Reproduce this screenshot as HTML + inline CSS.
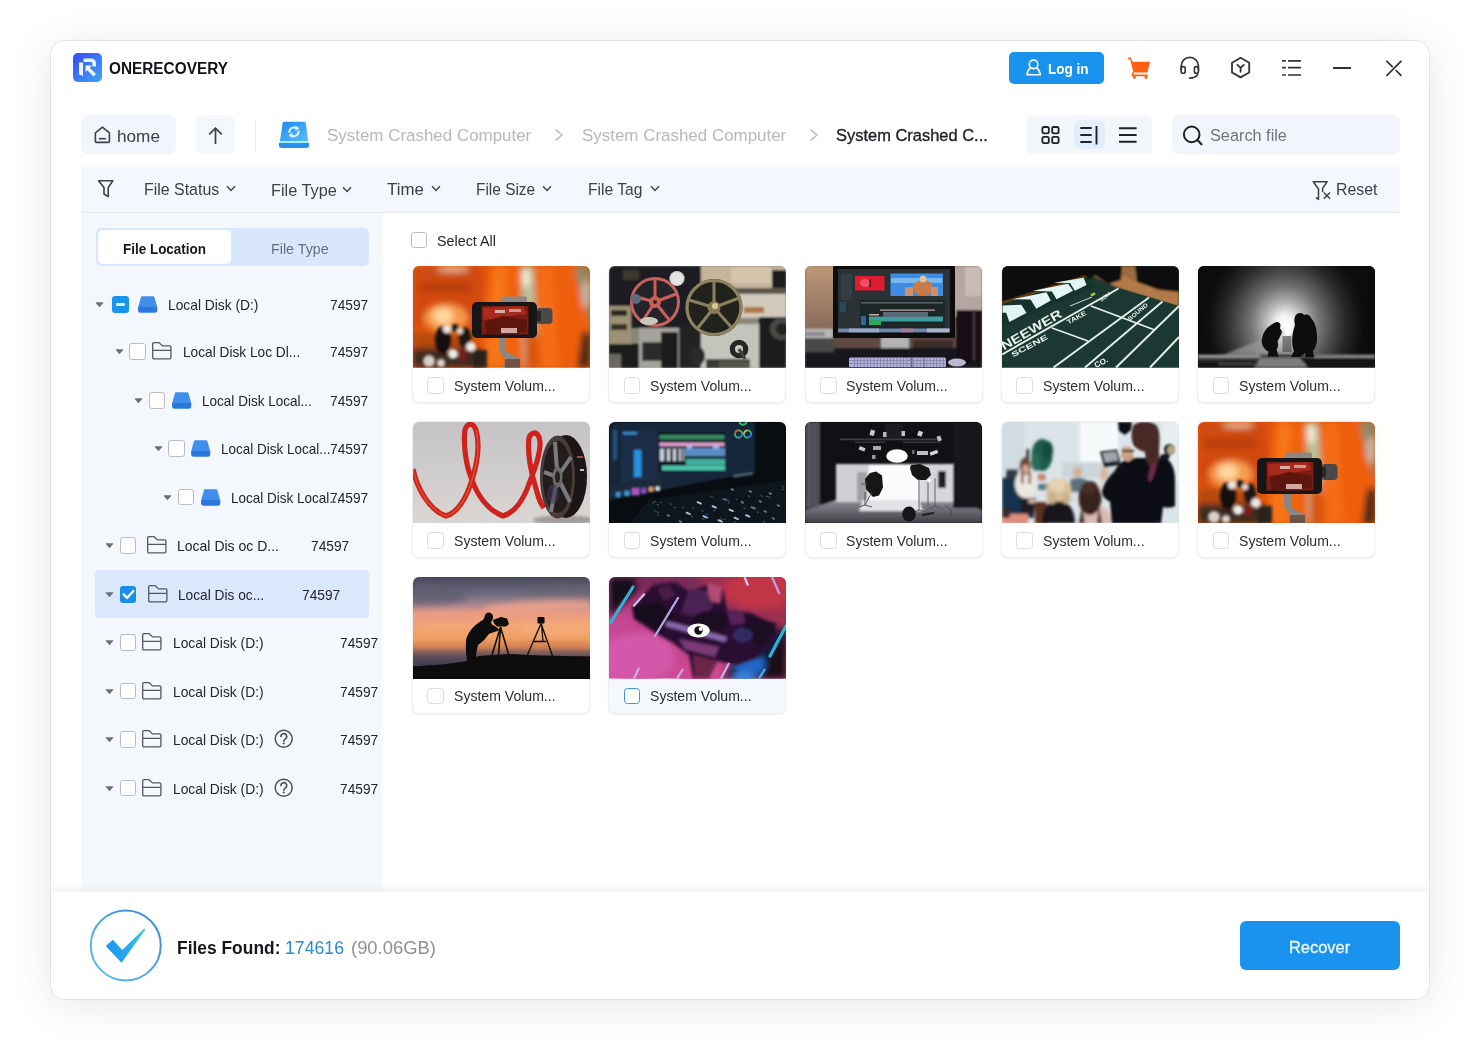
<!DOCTYPE html>
<html lang="en"><head><meta charset="utf-8"><title>OneRecovery</title>
<style>
html,body{margin:0;padding:0}
body{width:1480px;height:1040px;overflow:hidden;position:relative;background:#fff;font-family:"Liberation Sans",sans-serif}
.b{position:absolute;box-sizing:border-box;display:block}
.t{position:absolute;white-space:pre;transform-origin:0 0;font-family:"Liberation Sans",sans-serif}
</style></head><body>
<svg class="b" width="0" height="0" style="left:0;top:0"><defs><filter id="fa" filterUnits="userSpaceOnUse" x="-30" y="-30" width="240" height="170"><feGaussianBlur stdDeviation="0.5"/></filter><filter id="fb" filterUnits="userSpaceOnUse" x="-30" y="-30" width="240" height="170"><feGaussianBlur stdDeviation="1.0"/></filter><filter id="fc" filterUnits="userSpaceOnUse" x="-30" y="-30" width="240" height="170"><feGaussianBlur stdDeviation="1.8"/></filter><filter id="fd" filterUnits="userSpaceOnUse" x="-30" y="-30" width="240" height="170"><feGaussianBlur stdDeviation="3.2"/></filter><filter id="fe" filterUnits="userSpaceOnUse" x="-30" y="-30" width="240" height="170"><feGaussianBlur stdDeviation="6"/></filter><filter id="fg" filterUnits="userSpaceOnUse" x="-30" y="-30" width="240" height="170"><feGaussianBlur stdDeviation="10"/></filter></defs></svg>
<div class="b" style="left:51px;top:41px;width:1378px;height:958px;border-radius:14px;background:#fff;box-shadow:0 0 0 1px rgba(0,0,0,.07),0 6px 46px rgba(0,0,0,.10)"></div>
<svg class="b" style="left:72.9px;top:52.7px;" width="29" height="29" viewBox="0 0 29 29" fill="none"><defs><linearGradient id="lg" x1="0" y1="0" x2="1" y2="1"><stop offset="0" stop-color="#3a4af5"/><stop offset="1" stop-color="#3fa4f5"/></linearGradient></defs>
<rect width="29" height="29" rx="5" fill="url(#lg)"/>
<path d="M6 9.5h4v13.5l-4-1.5z" fill="#eaf6ff"/><path d="M10.5 5.5h8a4.5 4.5 0 0 1 4.5 4.5v3.5h-3.5v-3a1.5 1.5 0 0 0-1.5-1.5h-7.5z" fill="#eaf6ff"/><path d="M12.5 12.5h6.5l-2.2 2.2 6.2 6.2-2.5 2.5-6.2-6.2-1.8 1.8z" fill="#eaf6ff"/></svg>
<span class="t" style="left:109.3px;top:57.04px;font-size:17.2px;line-height:22px;color:#111318;font-weight:700;transform:scaleX(0.8936);">ONERECOVERY</span>
<div class="b" style="left:1009px;top:52px;width:94.5px;height:31.5px;border-radius:5px;background:#1a93ee"></div>
<svg class="b" style="left:1025px;top:58px;" width="17" height="19" viewBox="0 0 17 19" fill="none"><circle cx="8.600" cy="6.300" r="4.300" stroke="#fff" stroke-width="1.600"/><path d="M5.400 9.800C3.400 11.300 2.200 13.800 1.900 16.800h13.400c-.3-3-1.500-5.500-3.500-7" stroke="#fff" stroke-width="1.600" stroke-linejoin="round" stroke-linecap="round"/></svg>
<span class="t" style="left:1047.8px;top:60.01px;font-size:14.7px;line-height:19px;color:#fff;font-weight:700;transform:scaleX(0.9209);">Log in</span>
<svg class="b" style="left:1126px;top:55px;" width="26" height="26" viewBox="0 0 26 26" fill="none"><path d="M2.2 2.6h2.6l1.6 4.2H24l-2.6 10.6H7.4L4.2 4.4H2.2z" fill="#ff5f10"/><path d="M7.2 17.2 6.4 20.4h15.4" stroke="#ff5f10" stroke-width="1.6"/><circle cx="8.4" cy="22.2" r="1.5" fill="#ff5f10"/><circle cx="20" cy="22.2" r="1.5" fill="#ff5f10"/></svg>
<svg class="b" style="left:1178px;top:55px;" width="24" height="26" viewBox="0 0 24 26" fill="none"><path d="M3.2 15.4V11a8.6 8.6 0 0 1 17.2 0v4.4" stroke="#333" stroke-width="1.7"/><rect x="3.2" y="11.6" width="4" height="6.6" rx="1.8" stroke="#333" stroke-width="1.6"/><rect x="16.4" y="11.6" width="4" height="6.6" rx="1.8" stroke="#333" stroke-width="1.6"/><path d="M19.6 19.6c-1.4 2.4-4.2 3.4-8 3.6" stroke="#333" stroke-width="1.7" stroke-linecap="round"/></svg>
<svg class="b" style="left:1229px;top:55px;" width="24" height="26" viewBox="0 0 24 26" fill="none"><path d="M11.6 2.8 20.2 7.7v9.8l-8.6 4.9L3 17.5V7.7z" stroke="#333" stroke-width="1.8" stroke-linejoin="round"/><path d="M8.4 9.8l3.2 3 3.2-3M11.6 12.8v4" stroke="#333" stroke-width="1.8" stroke-linecap="round" stroke-linejoin="round"/></svg>
<svg class="b" style="left:1281px;top:58px;" width="22" height="20" viewBox="0 0 22 20" fill="none"><path d="M1 2.8h3.8M7 2.8h13M1 9.7h3.8M7 9.7h13M1 17h3.8M7 17h13" stroke="#333" stroke-width="1.7"/></svg>
<div class="b" style="left:1333px;top:66.5px;width:18.4px;height:2px;background:#333"></div>
<svg class="b" style="left:1384px;top:58px;" width="20" height="20" viewBox="0 0 20 20" fill="none"><path d="M17.4 2.8 2.4 17.8M2.4 2.8l6.4 6.4M11.6 12l5.8 5.8" stroke="#333" stroke-width="1.7" stroke-linecap="butt"/></svg>
<div class="b" style="left:81px;top:115px;width:94.5px;height:39px;border-radius:8px;background:#f1f5fc"></div>
<svg class="b" style="left:93px;top:125px;" width="19" height="19" viewBox="0 0 19 19" fill="none"><path d="M2.4 7.8 9.4 2.2l7 5.6v8.4a1.2 1.2 0 0 1-1.2 1.2H3.6a1.2 1.2 0 0 1-1.2-1.2z" stroke="#3b404a" stroke-width="1.6" stroke-linejoin="round"/><path d="M5.800 13.700h7" stroke="#3b404a" stroke-width="1.600"/></svg>
<span class="t" style="left:116.6px;top:124.77px;font-size:17.4px;line-height:23px;color:#3b404a;font-weight:400;transform:scaleX(0.9879);">home</span>
<div class="b" style="left:196px;top:115px;width:39px;height:39px;border-radius:8px;background:#f4f7fc"></div>
<svg class="b" style="left:205px;top:125px;" width="21" height="21" viewBox="0 0 21 21" fill="none"><path d="M10.5 19V3.2M4.2 9.4l6.3-6.3 6.3 6.3" stroke="#3b404a" stroke-width="1.7"/></svg>
<div class="b" style="left:254.8px;top:121px;width:1px;height:30px;background:#e6eaf1"></div>
<svg class="b" style="left:278px;top:121px;" width="32" height="28" viewBox="0 0 32 28" fill="none"><defs><linearGradient id="dg" x1="0" y1="0" x2="1" y2="1"><stop offset="0" stop-color="#1a8cf0"/><stop offset="1" stop-color="#5cbefa"/></linearGradient></defs>
<path d="M6.400.8h19.600a1.800 1.800 0 0 1 1.800 1.500L30.200 20.400H1.900L4.600 2.300A1.800 1.800 0 0 1 6.400.8z" fill="url(#dg)"/>
<rect x="1.700" y="20.200" width="28.700" height="2" fill="#a6f0ff"/>
<path d="M.9 22h30.200v2.600a2.400 2.400 0 0 1-2.400 2.400H3.300a2.400 2.400 0 0 1-2.400-2.400z" fill="#2392ec"/>
<path d="M11.400 11.200a4.700 4.700 0 0 1 7.500-3.800" stroke="#d8f8ff" stroke-width="2" fill="none" stroke-linecap="round"/><path d="M17.400 4.600l4 2.600-3.800 2.800z" fill="#d8f8ff"/>
<path d="M20.600 10.400a4.700 4.700 0 0 1-7.500 3.800" stroke="#d8f8ff" stroke-width="2" fill="none" stroke-linecap="round"/><path d="M14.600 17l-4-2.600 3.800-2.800z" fill="#d8f8ff"/></svg>
<span class="t" style="left:326.8px;top:124.68px;font-size:16.8px;line-height:22px;color:#b5b8bd;font-weight:400;transform:scaleX(1.0093);">System Crashed Computer</span>
<svg class="b" style="left:553px;top:127px;" width="12" height="16" viewBox="0 0 12 16" fill="none"><path d="M2.600 2.600l6.400 5.400-6.400 5.400" stroke="#b9bcc1" stroke-width="1.5"/></svg>
<span class="t" style="left:581.8px;top:124.68px;font-size:16.8px;line-height:22px;color:#b5b8bd;font-weight:400;transform:scaleX(1.0093);">System Crashed Computer</span>
<svg class="b" style="left:808px;top:127px;" width="12" height="16" viewBox="0 0 12 16" fill="none"><path d="M2.600 2.600l6.400 5.400-6.400 5.400" stroke="#b9bcc1" stroke-width="1.5"/></svg>
<span class="t" style="left:836.2px;top:124.68px;font-size:16.8px;line-height:22px;color:#1c1f26;font-weight:400;transform:scaleX(0.9807);-webkit-text-stroke:.35px #1c1f26;">System Crashed C...</span>
<div class="b" style="left:1026px;top:115px;width:126px;height:38.5px;border-radius:6px;background:#f3f7fc"></div>
<div class="b" style="left:1074px;top:120px;width:30.5px;height:29px;border-radius:6px;background:#e4edfa"></div>
<svg class="b" style="left:1040px;top:125px;" width="21" height="21" viewBox="0 0 21 21" fill="none"><rect x="2.4" y="2" width="6.4" height="6.400" rx="1.6" stroke="#1d212a" stroke-width="1.8"/><rect x="12.200" y="2" width="6.400" height="6.400" rx="1.600" stroke="#1d212a" stroke-width="1.800"/><rect x="2.400" y="11.800" width="6.400" height="6.400" rx="1.600" stroke="#1d212a" stroke-width="1.800"/><rect x="12.200" y="11.800" width="6.400" height="6.400" rx="1.600" stroke="#1d212a" stroke-width="1.800"/></svg>
<svg class="b" style="left:1079px;top:125px;" width="21" height="21" viewBox="0 0 21 21" fill="none"><path d="M1.300 3h11.400M1.300 10h11.400M1.300 17h11.400M17.500 1v18.400" stroke="#1d212a" stroke-width="1.900"/></svg>
<svg class="b" style="left:1118px;top:125px;" width="20" height="21" viewBox="0 0 20 21" fill="none"><path d="M1 3.200h17.600M1 10h17.600M1 16.800h17.600" stroke="#1d212a" stroke-width="1.900"/></svg>
<div class="b" style="left:1172px;top:115px;width:228px;height:38.5px;border-radius:6px;background:#f2f6fc"></div>
<svg class="b" style="left:1181px;top:124px;" width="23" height="23" viewBox="0 0 23 23" fill="none"><circle cx="10.700" cy="10.400" r="7.800" stroke="#1d212a" stroke-width="2"/><path d="M16.300 16l4.200 4.200" stroke="#1d212a" stroke-width="2.200" stroke-linecap="round"/></svg>
<span class="t" style="left:1209.8px;top:124.68px;font-size:16.8px;line-height:22px;color:#70747c;font-weight:400;transform:scaleX(0.9701);">Search file</span>
<div class="b" style="left:81px;top:164.5px;width:1319px;height:48px;background:linear-gradient(#fbfcfe 0,#f4f7fd 4px);border-bottom:1px solid #e6ebf3"></div>
<svg class="b" style="left:96px;top:178px;" width="20" height="22" viewBox="0 0 20 22" fill="none"><path d="M2.600 2.800h14.200l-4.600 6.800v9l-4.200-2.600V9.600z" stroke="#3b404a" stroke-width="1.600" stroke-linejoin="round"/></svg>
<span class="t" style="left:143.6px;top:178.78px;font-size:16.8px;line-height:22px;color:#3b404a;font-weight:400;transform:scaleX(0.9488);">File Status</span>
<svg class="b" style="left:226.2px;top:185.3px;" width="10" height="8" viewBox="0 0 10 8" fill="none"><path d="M1 1.300 5 5.400 9 1.300" stroke="#3b404a" stroke-width="1.400"/></svg>
<span class="t" style="left:270.7px;top:179.88px;font-size:16.8px;line-height:22px;color:#3b404a;font-weight:400;transform:scaleX(0.9697);">File Type</span>
<svg class="b" style="left:342.3px;top:185.85000000000002px;" width="10" height="8" viewBox="0 0 10 8" fill="none"><path d="M1 1.300 5 5.400 9 1.300" stroke="#3b404a" stroke-width="1.400"/></svg>
<span class="t" style="left:387px;top:178.78px;font-size:16.8px;line-height:22px;color:#3b404a;font-weight:400;transform:scaleX(1.0024);">Time</span>
<svg class="b" style="left:431px;top:185.3px;" width="10" height="8" viewBox="0 0 10 8" fill="none"><path d="M1 1.300 5 5.400 9 1.300" stroke="#3b404a" stroke-width="1.400"/></svg>
<span class="t" style="left:475.9px;top:178.78px;font-size:16.8px;line-height:22px;color:#3b404a;font-weight:400;transform:scaleX(0.9189);">File Size</span>
<svg class="b" style="left:542.3px;top:185.3px;" width="10" height="8" viewBox="0 0 10 8" fill="none"><path d="M1 1.300 5 5.400 9 1.300" stroke="#3b404a" stroke-width="1.400"/></svg>
<span class="t" style="left:587.9px;top:178.78px;font-size:16.8px;line-height:22px;color:#3b404a;font-weight:400;transform:scaleX(0.9313);">File Tag</span>
<svg class="b" style="left:650.1px;top:185.3px;" width="10" height="8" viewBox="0 0 10 8" fill="none"><path d="M1 1.300 5 5.400 9 1.300" stroke="#3b404a" stroke-width="1.400"/></svg>
<svg class="b" style="left:1311px;top:179px;" width="22" height="23" viewBox="0 0 22 23" fill="none"><path d="M7.500 20.400V10L2.300 2.700h13.900l-4.600 6.700v3.200M5.400 18.800l2.100 1.600" stroke="#3b404a" stroke-width="1.500" stroke-linejoin="round" stroke-linecap="round"/><path d="M12.800 13.500l6.300 6.200M19.100 13.500l-6.300 6.200" stroke="#3b404a" stroke-width="1.500"/></svg>
<span class="t" style="left:1335.7px;top:178.78px;font-size:16.8px;line-height:22px;color:#3b404a;font-weight:400;transform:scaleX(0.9456);">Reset</span>
<div class="b" style="left:81px;top:213px;width:304px;height:678px;background:linear-gradient(to right,#f4f8fd 299px,#fff 304px)"></div>
<div class="b" style="left:96px;top:228.3px;width:272.7px;height:37.9px;border-radius:5px;background:#d8e7fc"></div>
<div class="b" style="left:98.2px;top:230.2px;width:132.5px;height:33.9px;border-radius:5px;background:#fff"></div>
<span class="t" style="left:122.6px;top:239.97px;font-size:14.8px;line-height:19px;color:#15171c;font-weight:700;transform:scaleX(0.9094);">File Location</span>
<span class="t" style="left:271.2px;top:239.97px;font-size:14.8px;line-height:19px;color:#66707f;font-weight:400;transform:scaleX(0.9669);">File Type</span>
<div class="b" style="left:95.1px;top:570.1px;width:274.3px;height:47.6px;border-radius:4px;background:#dbe8fb"></div>
<svg class="b" style="left:95.4px;top:301.0px;" width="9" height="7" viewBox="0 0 9 7" fill="none"><path d="M1.2 1.300h6.600a.5.500 0 0 1 .4.800L4.900 5.700a.500.500 0 0 1-.8 0L.8 2.100a.500.500 0 0 1 .4-.8z" fill="#6c6f74"/></svg>
<div class="b" style="left:112.1px;top:295.90000000000003px;width:16.8px;height:16.8px;border-radius:3px;background:#1a93ee"></div>
<div class="b" style="left:115.69999999999999px;top:302.8px;width:9.600000000000001px;height:3.2px;border-radius:1px;background:#d9f0ff"></div>
<svg class="b" style="left:137.8px;top:295.90000000000003px;" width="20" height="18" viewBox="0 0 20 18" fill="none"><path d="M4.400.300h10.600a1.600 1.600 0 0 1 1.500 1.200L19.200 11H.2L2.900 1.500A1.600 1.600 0 0 1 4.400.3z" fill="#3f8eec"/><path d="M.1 10.900h19.200v3.600a2.300 2.300 0 0 1-2.300 2.300H2.400a2.300 2.300 0 0 1-2.300-2.300z" fill="#2b78dc"/></svg>
<span class="t" style="left:167.70000000000002px;top:295.97px;font-size:14.8px;line-height:19px;color:#23262d;font-weight:400;transform:scaleX(0.9316);">Local Disk (D:)</span>
<span class="t" style="left:330.4px;top:295.97px;font-size:14.8px;line-height:19px;color:#23262d;font-weight:400;transform:scaleX(0.9282);">74597</span>
<svg class="b" style="left:114.9px;top:348.4px;" width="9" height="7" viewBox="0 0 9 7" fill="none"><path d="M1.2 1.300h6.600a.5.500 0 0 1 .4.800L4.900 5.700a.500.500 0 0 1-.8 0L.8 2.100a.500.500 0 0 1 .4-.8z" fill="#6c6f74"/></svg>
<div class="b" style="left:129.1px;top:343.3px;width:16.8px;height:16.8px;border-radius:3px;background:#fff;border:1px solid #b9bdc3"></div>
<svg class="b" style="left:152.2px;top:342.3px;" width="20" height="18" viewBox="0 0 20 18" fill="none"><path d="M.7 15.600V1.900a1.200 1.200 0 0 1 1.200-1.200h5.200l3.400 3.200h7.200a1.200 1.200 0 0 1 1.200 1.200v10.500a1.200 1.200 0 0 1-1.200 1.200H1.900a1.200 1.200 0 0 1-1.200-1.200zM.7 8.400h18.200" stroke="#54575d" stroke-width="1.300" stroke-linejoin="round"/></svg>
<span class="t" style="left:182.5px;top:343.37px;font-size:14.8px;line-height:19px;color:#23262d;font-weight:400;transform:scaleX(0.9253);">Local Disk Loc Dl...</span>
<span class="t" style="left:330.4px;top:343.37px;font-size:14.8px;line-height:19px;color:#23262d;font-weight:400;transform:scaleX(0.9282);">74597</span>
<svg class="b" style="left:134.3px;top:396.9px;" width="9" height="7" viewBox="0 0 9 7" fill="none"><path d="M1.2 1.300h6.600a.5.500 0 0 1 .4.800L4.900 5.700a.500.500 0 0 1-.8 0L.8 2.100a.500.500 0 0 1 .4-.8z" fill="#6c6f74"/></svg>
<div class="b" style="left:148.6px;top:391.8px;width:16.8px;height:16.8px;border-radius:3px;background:#fff;border:1px solid #b9bdc3"></div>
<svg class="b" style="left:171.5px;top:391.8px;" width="20" height="18" viewBox="0 0 20 18" fill="none"><path d="M4.400.300h10.600a1.600 1.600 0 0 1 1.500 1.200L19.200 11H.2L2.900 1.500A1.600 1.600 0 0 1 4.400.3z" fill="#3f8eec"/><path d="M.1 10.900h19.200v3.600a2.300 2.300 0 0 1-2.300 2.300H2.400a2.300 2.300 0 0 1-2.300-2.300z" fill="#2b78dc"/></svg>
<span class="t" style="left:202.1px;top:391.87px;font-size:14.8px;line-height:19px;color:#23262d;font-weight:400;transform:scaleX(0.9151);">Local Disk Local...</span>
<span class="t" style="left:330.4px;top:391.87px;font-size:14.8px;line-height:19px;color:#23262d;font-weight:400;transform:scaleX(0.9282);">74597</span>
<svg class="b" style="left:153.7px;top:445.3px;" width="9" height="7" viewBox="0 0 9 7" fill="none"><path d="M1.2 1.300h6.600a.5.500 0 0 1 .4.800L4.900 5.700a.500.500 0 0 1-.8 0L.8 2.100a.500.500 0 0 1 .4-.8z" fill="#6c6f74"/></svg>
<div class="b" style="left:168.1px;top:440.20000000000005px;width:16.8px;height:16.8px;border-radius:3px;background:#fff;border:1px solid #b9bdc3"></div>
<svg class="b" style="left:190.8px;top:440.20000000000005px;" width="20" height="18" viewBox="0 0 20 18" fill="none"><path d="M4.400.300h10.600a1.600 1.600 0 0 1 1.500 1.200L19.200 11H.2L2.900 1.500A1.600 1.600 0 0 1 4.400.3z" fill="#3f8eec"/><path d="M.1 10.900h19.200v3.600a2.300 2.300 0 0 1-2.300 2.300H2.400a2.300 2.300 0 0 1-2.300-2.300z" fill="#2b78dc"/></svg>
<span class="t" style="left:221.4px;top:440.27px;font-size:14.8px;line-height:19px;color:#23262d;font-weight:400;transform:scaleX(0.9109);">Local Disk Local...</span>
<span class="t" style="left:330.4px;top:440.27px;font-size:14.8px;line-height:19px;color:#23262d;font-weight:400;transform:scaleX(0.9282);">74597</span>
<svg class="b" style="left:163.3px;top:493.7px;" width="9" height="7" viewBox="0 0 9 7" fill="none"><path d="M1.2 1.300h6.600a.5.500 0 0 1 .4.800L4.900 5.700a.500.500 0 0 1-.8 0L.8 2.100a.500.500 0 0 1 .4-.8z" fill="#6c6f74"/></svg>
<div class="b" style="left:177.7px;top:488.6px;width:16.8px;height:16.8px;border-radius:3px;background:#fff;border:1px solid #b9bdc3"></div>
<svg class="b" style="left:200.5px;top:488.6px;" width="20" height="18" viewBox="0 0 20 18" fill="none"><path d="M4.400.300h10.600a1.600 1.600 0 0 1 1.500 1.200L19.200 11H.2L2.900 1.500A1.600 1.600 0 0 1 4.400.3z" fill="#3f8eec"/><path d="M.1 10.900h19.200v3.600a2.300 2.300 0 0 1-2.300 2.300H2.400a2.300 2.300 0 0 1-2.300-2.300z" fill="#2b78dc"/></svg>
<span class="t" style="left:231.1px;top:488.67px;font-size:14.8px;line-height:19px;color:#23262d;font-weight:400;transform:scaleX(0.9109);">Local Disk Local...</span>
<span class="t" style="left:330.4px;top:488.67px;font-size:14.8px;line-height:19px;color:#23262d;font-weight:400;transform:scaleX(0.9282);">74597</span>
<svg class="b" style="left:105.4px;top:542.1px;" width="9" height="7" viewBox="0 0 9 7" fill="none"><path d="M1.2 1.300h6.600a.5.500 0 0 1 .4.800L4.900 5.700a.500.500 0 0 1-.8 0L.8 2.100a.500.500 0 0 1 .4-.8z" fill="#6c6f74"/></svg>
<div class="b" style="left:119.5px;top:537.0px;width:16.8px;height:16.8px;border-radius:3px;background:#fff;border:1px solid #b9bdc3"></div>
<svg class="b" style="left:147.1px;top:536.0px;" width="20" height="18" viewBox="0 0 20 18" fill="none"><path d="M.7 15.600V1.900a1.200 1.200 0 0 1 1.200-1.200h5.200l3.400 3.200h7.200a1.200 1.200 0 0 1 1.200 1.200v10.500a1.200 1.200 0 0 1-1.200 1.200H1.900a1.200 1.200 0 0 1-1.200-1.200zM.7 8.400h18.200" stroke="#54575d" stroke-width="1.300" stroke-linejoin="round"/></svg>
<span class="t" style="left:177.4px;top:537.07px;font-size:14.8px;line-height:19px;color:#23262d;font-weight:400;transform:scaleX(0.9466);">Local Dis oc D...</span>
<span class="t" style="left:311.0px;top:537.07px;font-size:14.8px;line-height:19px;color:#23262d;font-weight:400;transform:scaleX(0.9282);">74597</span>
<svg class="b" style="left:105.4px;top:590.9000000000001px;" width="9" height="7" viewBox="0 0 9 7" fill="none"><path d="M1.2 1.300h6.600a.5.500 0 0 1 .4.800L4.900 5.700a.500.500 0 0 1-.8 0L.8 2.100a.500.500 0 0 1 .4-.8z" fill="#6c6f74"/></svg>
<div class="b" style="left:119.5px;top:585.8000000000001px;width:16.8px;height:16.8px;border-radius:3px;background:#1a8ee8"></div>
<svg class="b" style="left:119.5px;top:585.8000000000001px;" width="17" height="17" viewBox="0 0 17 17" fill="none"><path d="M3.700 8.400l3.400 3.600 6.200-7" stroke="#fff" stroke-width="2.300" stroke-linecap="round" stroke-linejoin="round"/></svg>
<svg class="b" style="left:147.5px;top:584.8000000000001px;" width="20" height="18" viewBox="0 0 20 18" fill="none"><path d="M.7 15.600V1.900a1.200 1.200 0 0 1 1.200-1.200h5.200l3.400 3.200h7.200a1.200 1.200 0 0 1 1.200 1.200v10.500a1.200 1.200 0 0 1-1.200 1.200H1.900a1.200 1.200 0 0 1-1.200-1.200zM.7 8.400h18.200" stroke="#54575d" stroke-width="1.300" stroke-linejoin="round"/></svg>
<span class="t" style="left:177.6px;top:585.87px;font-size:14.8px;line-height:19px;color:#23262d;font-weight:400;transform:scaleX(0.9263);">Local Dis oc...</span>
<span class="t" style="left:302.0px;top:585.87px;font-size:14.8px;line-height:19px;color:#23262d;font-weight:400;transform:scaleX(0.9282);">74597</span>
<svg class="b" style="left:105.4px;top:639.2px;" width="9" height="7" viewBox="0 0 9 7" fill="none"><path d="M1.2 1.300h6.600a.5.500 0 0 1 .4.800L4.900 5.700a.500.500 0 0 1-.8 0L.8 2.100a.500.500 0 0 1 .4-.8z" fill="#6c6f74"/></svg>
<div class="b" style="left:119.5px;top:634.1px;width:16.8px;height:16.8px;border-radius:3px;background:#fff;border:1px solid #b9bdc3"></div>
<svg class="b" style="left:142.39999999999998px;top:633.1px;" width="20" height="18" viewBox="0 0 20 18" fill="none"><path d="M.7 15.600V1.900a1.200 1.200 0 0 1 1.200-1.200h5.200l3.400 3.200h7.200a1.200 1.200 0 0 1 1.200 1.200v10.500a1.200 1.200 0 0 1-1.200 1.200H1.900a1.200 1.200 0 0 1-1.200-1.200zM.7 8.400h18.200" stroke="#54575d" stroke-width="1.300" stroke-linejoin="round"/></svg>
<span class="t" style="left:172.5px;top:634.17px;font-size:14.8px;line-height:19px;color:#23262d;font-weight:400;transform:scaleX(0.9336);">Local Disk (D:)</span>
<span class="t" style="left:339.9px;top:634.17px;font-size:14.8px;line-height:19px;color:#23262d;font-weight:400;transform:scaleX(0.9282);">74597</span>
<svg class="b" style="left:105.4px;top:687.8000000000001px;" width="9" height="7" viewBox="0 0 9 7" fill="none"><path d="M1.2 1.300h6.600a.5.500 0 0 1 .4.800L4.900 5.700a.500.500 0 0 1-.8 0L.8 2.100a.500.500 0 0 1 .4-.8z" fill="#6c6f74"/></svg>
<div class="b" style="left:119.5px;top:682.7px;width:16.8px;height:16.8px;border-radius:3px;background:#fff;border:1px solid #b9bdc3"></div>
<svg class="b" style="left:142.39999999999998px;top:681.7px;" width="20" height="18" viewBox="0 0 20 18" fill="none"><path d="M.7 15.600V1.900a1.200 1.200 0 0 1 1.200-1.200h5.200l3.400 3.200h7.200a1.200 1.200 0 0 1 1.200 1.200v10.500a1.200 1.200 0 0 1-1.200 1.200H1.900a1.200 1.200 0 0 1-1.200-1.200zM.7 8.400h18.200" stroke="#54575d" stroke-width="1.300" stroke-linejoin="round"/></svg>
<span class="t" style="left:172.5px;top:682.77px;font-size:14.8px;line-height:19px;color:#23262d;font-weight:400;transform:scaleX(0.9336);">Local Disk (D:)</span>
<span class="t" style="left:339.9px;top:682.77px;font-size:14.8px;line-height:19px;color:#23262d;font-weight:400;transform:scaleX(0.9282);">74597</span>
<svg class="b" style="left:105.4px;top:736.1px;" width="9" height="7" viewBox="0 0 9 7" fill="none"><path d="M1.2 1.300h6.600a.5.500 0 0 1 .4.800L4.900 5.700a.500.500 0 0 1-.8 0L.8 2.100a.500.500 0 0 1 .4-.8z" fill="#6c6f74"/></svg>
<div class="b" style="left:119.5px;top:731.0px;width:16.8px;height:16.8px;border-radius:3px;background:#fff;border:1px solid #b9bdc3"></div>
<svg class="b" style="left:142.39999999999998px;top:730.0px;" width="20" height="18" viewBox="0 0 20 18" fill="none"><path d="M.7 15.600V1.900a1.200 1.200 0 0 1 1.200-1.200h5.200l3.400 3.200h7.200a1.200 1.200 0 0 1 1.200 1.200v10.500a1.200 1.200 0 0 1-1.200 1.200H1.900a1.200 1.200 0 0 1-1.200-1.200zM.7 8.400h18.200" stroke="#54575d" stroke-width="1.300" stroke-linejoin="round"/></svg>
<span class="t" style="left:172.5px;top:731.07px;font-size:14.8px;line-height:19px;color:#23262d;font-weight:400;transform:scaleX(0.9336);">Local Disk (D:)</span>
<span class="t" style="left:339.9px;top:731.07px;font-size:14.8px;line-height:19px;color:#23262d;font-weight:400;transform:scaleX(0.9282);">74597</span>
<svg class="b" style="left:273.5px;top:729.1999999999999px;" width="20" height="20" viewBox="0 0 20 20" fill="none"><circle cx="9.700" cy="9.700" r="8.500" stroke="#4a4d53" stroke-width="1.500"/><path d="M6.900 7.600a2.900 2.900 0 1 1 4.300 2.500c-.9.500-1.400 1-1.400 2.100" stroke="#4a4d53" stroke-width="1.600" stroke-linecap="round"/><circle cx="9.700" cy="14.600" r="1" fill="#4a4d53"/></svg>
<svg class="b" style="left:105.4px;top:784.7px;" width="9" height="7" viewBox="0 0 9 7" fill="none"><path d="M1.2 1.300h6.600a.5.500 0 0 1 .4.800L4.900 5.700a.500.500 0 0 1-.8 0L.8 2.100a.500.500 0 0 1 .4-.8z" fill="#6c6f74"/></svg>
<div class="b" style="left:119.5px;top:779.6px;width:16.8px;height:16.8px;border-radius:3px;background:#fff;border:1px solid #b9bdc3"></div>
<svg class="b" style="left:142.39999999999998px;top:778.6px;" width="20" height="18" viewBox="0 0 20 18" fill="none"><path d="M.7 15.600V1.900a1.200 1.200 0 0 1 1.200-1.200h5.200l3.400 3.200h7.200a1.200 1.200 0 0 1 1.200 1.200v10.500a1.200 1.200 0 0 1-1.200 1.200H1.900a1.200 1.200 0 0 1-1.200-1.200zM.7 8.400h18.200" stroke="#54575d" stroke-width="1.300" stroke-linejoin="round"/></svg>
<span class="t" style="left:172.5px;top:779.67px;font-size:14.8px;line-height:19px;color:#23262d;font-weight:400;transform:scaleX(0.9336);">Local Disk (D:)</span>
<span class="t" style="left:339.9px;top:779.67px;font-size:14.8px;line-height:19px;color:#23262d;font-weight:400;transform:scaleX(0.9282);">74597</span>
<svg class="b" style="left:273.5px;top:777.8px;" width="20" height="20" viewBox="0 0 20 20" fill="none"><circle cx="9.700" cy="9.700" r="8.500" stroke="#4a4d53" stroke-width="1.500"/><path d="M6.900 7.600a2.900 2.900 0 1 1 4.300 2.500c-.9.500-1.400 1-1.400 2.100" stroke="#4a4d53" stroke-width="1.600" stroke-linecap="round"/><circle cx="9.700" cy="14.600" r="1" fill="#4a4d53"/></svg>
<div class="b" style="left:410.5px;top:231.5px;width:16.6px;height:16.6px;border-radius:3px;background:#fff;border:1px solid #b9bdc3"></div>
<span class="t" style="left:436.7px;top:231.67px;font-size:14.8px;line-height:19px;color:#23262d;font-weight:400;transform:scaleX(0.9691);">Select All</span>
<div class="b" style="left:412.1px;top:265.9px;width:178px;height:137px;border-radius:7px;background:#fff;border:1px solid #eeeff1;box-shadow:0 1px 2px rgba(0,0,0,.07)"></div>
<svg class="b" style="left:412.6px;top:266.4px;border-radius:6px 6px 0 0" width="177" height="101.500" viewBox="0 0 177 101.500" preserveAspectRatio="none"><rect x="0" y="0" width="177" height="101.5" fill="#e4560c" /><g filter="url(#fd)" ><rect x="0" y="0" width="70" height="60" fill="#d24a0a" /><ellipse cx="33" cy="52" rx="22" ry="14" fill="#f89a4c" /><ellipse cx="30" cy="50" rx="10" ry="8" fill="#ffd9a0" /><rect x="6" y="17" width="52" height="9" fill="#b83c08" /><rect x="8" y="4" width="50" height="6" fill="#c8501a" /><ellipse cx="40" cy="3" rx="16" ry="3" fill="#e8b890" /><rect x="0" y="82" width="74" height="20" fill="#3a2a22" /><rect x="0" y="66" width="60" height="16" fill="#b8480e" /><path d="M77 0h36l7 101.5H67z" fill="#f0620c" /><path d="M80 0h14l-4 101.5H72z" fill="#f67416" /><path d="M108 0h12l6 60-8 41h-8z" fill="#b8c098" /><ellipse cx="113" cy="12" rx="4" ry="10" fill="#f4f0d8" /><path d="M120 0h41l16 60v41.5h-50z" fill="#ee5e0a" /><path d="M124 0h16l6 101.5h-18z" fill="#f46c12" /><path d="M161 0h16v60z" fill="#8c8a68" /><ellipse cx="173" cy="28" rx="5" ry="14" fill="#c0b8a8" /><path d="M112 60l10 0 4 41.5h-14z" fill="#d8560e" /><path d="M169 66h8v35.500h-13z" fill="#4a2a18" /></g><g filter="url(#fc)" ><ellipse cx="30" cy="74" rx="8" ry="14" fill="#15110f" /><ellipse cx="52" cy="72" rx="6" ry="11" fill="#1c1512" /><ellipse cx="42" cy="62" rx="4" ry="4" fill="#1a1210" /><circle cx="34" cy="63" r="4" fill="#ece6e2" /><circle cx="47" cy="65" r="3" fill="#e6dcd6" /><circle cx="58" cy="81" r="5" fill="#eee8e4" /><circle cx="40" cy="88" r="5" fill="#f0eae6" /><circle cx="16" cy="95" r="6" fill="#d8d0ca" /><circle cx="28" cy="97" r="4" fill="#e0d8d2" /><ellipse cx="50" cy="90" rx="4" ry="6" fill="#7a1c18" /><rect x="60" y="84" width="14" height="17.5" fill="#2a211d" /></g><g filter="url(#fa)" ><path d="M86 71h7v14l14 8v8.5H91l1-9-6-8z" fill="#8c8682" /><rect x="92" y="93" width="15" height="8.5" fill="#6e5248" /><rect x="88" y="30.5" width="26" height="7" fill="#8e8884" rx="1.5"/><rect x="123" y="42" width="16.5" height="16" fill="#4c4649" rx="4"/><rect x="124" y="45" width="4" height="10" fill="#2a2628" /><rect x="59" y="36" width="65" height="36" fill="#181213" rx="5"/><rect x="68.5" y="40" width="47" height="28.5" fill="#7c1a12" /><path d="M70 42l40-2 4 8-44 6z" fill="#a82a1c" /><path d="M72 56l18-6 24 4v12l-40 2z" fill="#5c120e" /><rect x="88" y="62" width="16" height="5" fill="#d0a8a0" /><rect x="82" y="44" width="10" height="3" fill="#d8b0a8" /><rect x="96" y="43" width="12" height="3" fill="#c89890" /></g></svg>
<div class="b" style="left:427.40000000000003px;top:376.9px;width:16.7px;height:16.7px;border-radius:3.500px;background:#fff;border:1.200px solid #dcdcde"></div>
<span class="t" style="left:453.8px;top:376.87px;font-size:14.8px;line-height:19px;color:#2a2d33;font-weight:400;transform:scaleX(0.9502);">System Volum...</span>
<div class="b" style="left:608.4px;top:265.9px;width:178px;height:137px;border-radius:7px;background:#fff;border:1px solid #eeeff1;box-shadow:0 1px 2px rgba(0,0,0,.07)"></div>
<svg class="b" style="left:608.9px;top:266.4px;border-radius:6px 6px 0 0" width="177" height="101.500" viewBox="0 0 177 101.500" preserveAspectRatio="none"><rect x="0" y="0" width="177" height="101.5" fill="#8c8678" /><g filter="url(#fb)" ><rect x="0" y="0" width="92" height="62" fill="#1d1c22" /><rect x="0" y="40" width="22" height="38" fill="#9c9074" /><rect x="2" y="44" width="16" height="6" fill="#2a2824" /><rect x="2" y="58" width="16" height="6" fill="#35322c" /><rect x="92" y="0" width="85" height="22" fill="#c4b49c" /><rect x="122" y="1" width="40" height="16" fill="#d4c4ac" /><rect x="163" y="4" width="14" height="28" fill="#1a1a1e" /><rect x="95" y="22" width="82" height="8" fill="#5c5448" /><rect x="128" y="28" width="49" height="24" fill="#d2cabc" /><rect x="135" y="41" width="20" height="6" fill="#b07848" /><rect x="112" y="30" width="18" height="20" fill="#403c38" /><rect x="86" y="58" width="66" height="44" fill="#c4c4bc" /><rect x="150" y="51" width="27" height="51" fill="#1b1b1c" /><circle cx="172" cy="63" r="11" fill="#4a4a46" /><circle cx="173" cy="63" r="6" fill="#20201f" /><rect x="0" y="78" width="32" height="24" fill="#1c1b1c" /><rect x="0" y="88" width="12" height="14" fill="#6a6860" /><rect x="30" y="62" width="60" height="40" fill="#a4a49c" /><rect x="33" y="76" width="20" height="19" fill="#3c3c3a" /><rect x="34.5" y="77.5" width="17" height="16" fill="#2a2a29" /><rect x="52" y="66" width="17" height="36" fill="#1e1e1f" /><rect x="70" y="58" width="22" height="44" fill="#232322" /><ellipse cx="88" cy="90" rx="8" ry="10" fill="#2c2c2b" /><rect x="14" y="4" width="16" height="10" fill="#3a382e" /><rect x="97" y="93" width="44" height="9" fill="#3a3a36" /><rect x="110" y="95" width="30" height="7" fill="#55554e" /></g><g filter="url(#fa)" ><circle cx="46" cy="36" r="24.5" fill="#26222a" /><circle cx="46" cy="36" r="23.500" fill="none" stroke="#c4645e" stroke-width="3"/><path d="M46 36L46 13M46 36L67 28M46 36L61 55M46 36L33 56M46 36L24 30" stroke="#c8605c" stroke-width="3" fill="none" /><circle cx="46" cy="36" r="6" fill="#c86058" /><circle cx="46" cy="36" r="2" fill="#40201c" /><ellipse cx="40" cy="55" rx="9" ry="4" fill="#c8c8c0" /><circle cx="27" cy="33" r="5" fill="#5a6a7a" /><circle cx="105" cy="41.5" r="28.5" fill="#24221f" /><circle cx="105" cy="41.500" r="27" fill="none" stroke="#8e8464" stroke-width="3.200"/><path d="M105 41.500L105 15M105 41.500L130 32M105 41.500L123 62M105 41.500L88 63M105 41.500L80 34" stroke="#8a8060" stroke-width="3" fill="none" /><circle cx="105" cy="41.5" r="6.5" fill="#8a7c58" /><circle cx="106" cy="40" r="3" fill="#d8c898" /><circle cx="68" cy="12.5" r="7.6" fill="#d6d6d4" /><circle cx="68" cy="12.5" r="6" fill="#e4e4e2" /><circle cx="130" cy="83" r="9.3" fill="#262625" /><circle cx="130" cy="83" r="4" fill="#c8c8c4" /><path d="M130 83l6 10" stroke="#404040" stroke-width="3" fill="none" /></g></svg>
<div class="b" style="left:623.6999999999999px;top:376.9px;width:16.7px;height:16.7px;border-radius:3.500px;background:#fff;border:1.200px solid #dcdcde"></div>
<span class="t" style="left:650.1px;top:376.87px;font-size:14.8px;line-height:19px;color:#2a2d33;font-weight:400;transform:scaleX(0.9502);">System Volum...</span>
<div class="b" style="left:804.7px;top:265.9px;width:178px;height:137px;border-radius:7px;background:#fff;border:1px solid #eeeff1;box-shadow:0 1px 2px rgba(0,0,0,.07)"></div>
<svg class="b" style="left:805.2px;top:266.4px;border-radius:6px 6px 0 0" width="177" height="101.500" viewBox="0 0 177 101.500" preserveAspectRatio="none"><rect x="0" y="0" width="177" height="101.5" fill="#8a6e60" /><g filter="url(#fb)" ><defs><linearGradient id="m1" x1="0" y1="0" x2="0" y2="1"><stop offset="0" stop-color="#bc9878"/><stop offset="1" stop-color="#7a5c50"/></linearGradient></defs><rect x="0" y="0" width="32" height="84" fill="url(#m1)" /><rect x="146" y="0" width="31" height="50" fill="#b6a6a2" /><rect x="160" y="0" width="17" height="30" fill="#c8bab4" /><rect x="28" y="70" width="125" height="16" fill="#5e4842" /><rect x="76" y="71" width="28" height="12" fill="#b4b2b2" /><rect x="108" y="74" width="40" height="8" fill="#3a2e2c" /><rect x="0" y="82" width="177" height="20" fill="#19161a" /><rect x="0" y="63" width="28" height="11" fill="#b8b8b8" /><rect x="0" y="72" width="29" height="14" fill="#4a4848" /><rect x="0" y="66" width="20" height="4" fill="#8a8a8c" /><rect x="151" y="44" width="26" height="52" fill="#141013" /><rect x="168" y="46" width="2" height="48" fill="#4a3a3a" /></g><g filter="url(#fa)" ><rect x="28" y="0" width="122" height="72" fill="#0f0f11" rx="1"/><rect x="33" y="3" width="112" height="63.5" fill="#2b3234" /><rect x="36" y="8" width="11" height="26" fill="#343e42" /><rect x="35" y="36" width="6" height="10" fill="#2c4a5a" /><rect x="50" y="10" width="29.5" height="14.5" fill="#de1f32" /><ellipse cx="60" cy="17" rx="5" ry="4" fill="#f0506a" /><rect x="64.5" y="13" width="1.5" height="8" fill="#5a0a14" /><rect x="85.5" y="7.5" width="52.5" height="22.5" fill="#3a8ce2" /><rect x="86" y="12" width="51" height="5" fill="#7ab8f0" /><ellipse cx="118" cy="22" rx="10" ry="8" fill="#c87a48" /><circle cx="118" cy="13" r="3.5" fill="#e0c0a0" /><rect x="100" y="21" width="8" height="9" fill="#d09070" /><rect x="126" y="21" width="7" height="9" fill="#d09070" /><rect x="55" y="34" width="85" height="29" fill="#1f2527" /><rect x="56" y="36" width="82" height="1.5" fill="#59646a" /><rect x="75" y="43.5" width="55" height="1.2" fill="#c9a9a9" /><rect x="64" y="50.5" width="74" height="5" fill="#3f9ea0" /><rect x="78" y="46" width="45" height="5" fill="#566a78" /><rect x="64" y="53.5" width="12" height="5.5" fill="#2fa465" /><rect x="56" y="50" width="5" height="9" fill="#2a6a9a" /><rect x="64" y="48" width="10" height="1.5" fill="#d0a8a8" /><rect x="33" y="62.5" width="112" height="3.8" fill="#6f86b0" /><rect x="44" y="62.5" width="30" height="3.8" fill="#9aa8c8" /><rect x="96" y="62.5" width="12" height="3.8" fill="#a87a90" /><rect x="122" y="62.5" width="22" height="3.8" fill="#b0b4c8" /><rect x="44" y="91.5" width="97" height="9.5" fill="#b2b2da" rx="1.500"/><rect x="106" y="92" width="1.5" height="9" fill="#6a6a8a" /><rect x="118" y="92" width="1.5" height="9" fill="#6a6a8a" /><ellipse cx="152" cy="96.5" rx="9" ry="4" fill="#b9b9d2" /><rect x="48.8" y="91.5" width="0.8" height="9.5" fill="#7c7ca6" /><rect x="52.1" y="91.5" width="0.8" height="9.5" fill="#7c7ca6" /><rect x="55.4" y="91.5" width="0.8" height="9.5" fill="#7c7ca6" /><rect x="58.7" y="91.5" width="0.8" height="9.5" fill="#7c7ca6" /><rect x="62.0" y="91.5" width="0.8" height="9.5" fill="#7c7ca6" /><rect x="65.3" y="91.5" width="0.8" height="9.5" fill="#7c7ca6" /><rect x="68.6" y="91.5" width="0.8" height="9.5" fill="#7c7ca6" /><rect x="71.9" y="91.5" width="0.8" height="9.5" fill="#7c7ca6" /><rect x="75.2" y="91.5" width="0.8" height="9.5" fill="#7c7ca6" /><rect x="78.5" y="91.5" width="0.8" height="9.5" fill="#7c7ca6" /><rect x="81.8" y="91.5" width="0.8" height="9.5" fill="#7c7ca6" /><rect x="85.1" y="91.5" width="0.8" height="9.5" fill="#7c7ca6" /><rect x="88.4" y="91.5" width="0.8" height="9.5" fill="#7c7ca6" /><rect x="91.69999999999999" y="91.5" width="0.8" height="9.5" fill="#7c7ca6" /><rect x="95.0" y="91.5" width="0.8" height="9.5" fill="#7c7ca6" /><rect x="98.3" y="91.5" width="0.8" height="9.5" fill="#7c7ca6" /><rect x="101.6" y="91.5" width="0.8" height="9.5" fill="#7c7ca6" /><rect x="104.9" y="91.5" width="0.8" height="9.5" fill="#7c7ca6" /><rect x="108.19999999999999" y="91.5" width="0.8" height="9.5" fill="#7c7ca6" /><rect x="111.5" y="91.5" width="0.8" height="9.5" fill="#7c7ca6" /><rect x="114.8" y="91.5" width="0.8" height="9.5" fill="#7c7ca6" /><rect x="118.1" y="91.5" width="0.8" height="9.5" fill="#7c7ca6" /><rect x="121.39999999999999" y="91.5" width="0.8" height="9.5" fill="#7c7ca6" /><rect x="124.69999999999999" y="91.5" width="0.8" height="9.5" fill="#7c7ca6" /><rect x="128.0" y="91.5" width="0.8" height="9.5" fill="#7c7ca6" /><rect x="131.3" y="91.5" width="0.8" height="9.5" fill="#7c7ca6" /><rect x="134.6" y="91.5" width="0.8" height="9.5" fill="#7c7ca6" /><rect x="137.89999999999998" y="91.5" width="0.8" height="9.5" fill="#7c7ca6" /><rect x="44" y="94.3" width="97" height="0.7" fill="#7c7ca6" /><rect x="44" y="97.2" width="97" height="0.7" fill="#7c7ca6" /></g></svg>
<div class="b" style="left:820.0px;top:376.9px;width:16.7px;height:16.7px;border-radius:3.500px;background:#fff;border:1.200px solid #dcdcde"></div>
<span class="t" style="left:846.4000000000001px;top:376.87px;font-size:14.8px;line-height:19px;color:#2a2d33;font-weight:400;transform:scaleX(0.9502);">System Volum...</span>
<div class="b" style="left:1001.0px;top:265.9px;width:178px;height:137px;border-radius:7px;background:#fff;border:1px solid #eeeff1;box-shadow:0 1px 2px rgba(0,0,0,.07)"></div>
<svg class="b" style="left:1001.5px;top:266.4px;border-radius:6px 6px 0 0" width="177" height="101.500" viewBox="0 0 177 101.500" preserveAspectRatio="none"><rect x="0" y="0" width="177" height="101.5" fill="#1b3832" /><g filter="url(#fb)" ><path d="M0 0h177v40L116 22 92 11 0 37z" fill="#0b0b0b" /><path d="M96 0h81v41l-61-19-24-11z" fill="#b27a4a" /><path d="M100 0h77v10l-40 7z" fill="#9c6a3e" /><path d="M92 0h28l-1 14-12 4-14-8z" fill="#0d0b0a" /><path d="M133 0h44v26l-20-2-22-8z" fill="#0b0a0a" /><path d="M0 37.500L84 11" stroke="#a8641e" stroke-width="1.6" fill="none" /></g><g filter="url(#fa)" ><path d="M0 38L84 11.500l10 8.500L0 61z" fill="#16302a" /><path d="M0 61L116 22l61 18v61.500H0z" fill="#1b3832" /><path d="M.5 39.400L19.400 38.700 24.500 47.100 7.300 55.900 4.200 46.800H.5z" fill="#dff4f3" /><path d="M10.700 33.300L44.400 26.200 48.800 34.600 34.300 42.700 28.600 33.600z" fill="#e4f7f6" /><path d="M30.900 24.800L66.100 17.700 71.100 24.800 54.600 33.300 49.900 25.500z" fill="#e4f7f6" /><path d="M51.900 16.700L81.600 11.700 84.600 19.100 72.800 24.800 68.100 17.100z" fill="#dff4f3" /><path d="M0 88.500L116.500 22.500" stroke="#e6f0ec" stroke-width="1.9" fill="none" /><path d="M51.500 101.500L147 31.500" stroke="#e6f0ec" stroke-width="1.9" fill="none" /><path d="M83 101.500L160.500 35.500" stroke="#e6f0ec" stroke-width="1.9" fill="none" /><path d="M114 101.500L177 40" stroke="#e6f0ec" stroke-width="1.9" fill="none" /><path d="M148 101.500L177 71" stroke="#e6f0ec" stroke-width="1.9" fill="none" /><path d="M50 62L86 75" stroke="#e6f0ec" stroke-width="1.7" fill="none" /><path d="M89 40L151.500 63.500" stroke="#e6f0ec" stroke-width="1.7" fill="none" /><g font-family="Liberation Sans" font-weight="700" fill="#e8f2ee"><text transform="translate(2 84.500) rotate(-30)" font-size="12.500" textLength="68" lengthAdjust="spacingAndGlyphs">NEEWER</text><text transform="translate(11 91.500) rotate(-28)" font-size="7.400" textLength="40" lengthAdjust="spacingAndGlyphs">SCENE</text><text transform="translate(66.500 58.500) rotate(-29)" font-size="6.600" textLength="21" lengthAdjust="spacingAndGlyphs">TAKE</text><text transform="translate(128 55) rotate(-40)" font-size="6" textLength="24" lengthAdjust="spacingAndGlyphs">SOUND</text><text transform="translate(100 36) rotate(-42)" font-size="5" >ROLL</text><text transform="translate(94 102) rotate(-27)" font-size="8">CO.</text></g><path d="M68 40l22-9" stroke="#c8d8d4" stroke-width="1" fill="none" /><rect x="88.5" y="27.5" width="4.5" height="2.5" fill="#b8c820" transform="rotate(-25 90 28)"/></g></svg>
<div class="b" style="left:1016.3px;top:376.9px;width:16.7px;height:16.7px;border-radius:3.500px;background:#fff;border:1.200px solid #dcdcde"></div>
<span class="t" style="left:1042.7px;top:376.87px;font-size:14.8px;line-height:19px;color:#2a2d33;font-weight:400;transform:scaleX(0.9502);">System Volum...</span>
<div class="b" style="left:1197.3px;top:265.9px;width:178px;height:137px;border-radius:7px;background:#fff;border:1px solid #eeeff1;box-shadow:0 1px 2px rgba(0,0,0,.07)"></div>
<svg class="b" style="left:1197.8px;top:266.4px;border-radius:6px 6px 0 0" width="177" height="101.500" viewBox="0 0 177 101.500" preserveAspectRatio="none"><rect x="0" y="0" width="177" height="101.5" fill="#0b0b0b" /><defs><radialGradient id="tg" cx="87" cy="58" r="80" gradientUnits="userSpaceOnUse" gradientTransform="translate(0 -4) scale(1 1.070)"><stop offset="0" stop-color="#fff"/><stop offset=".11" stop-color="#f0f0f0"/><stop offset=".25" stop-color="#b4b4b4"/><stop offset=".43" stop-color="#747474"/><stop offset=".6" stop-color="#4a4a4a"/><stop offset=".75" stop-color="#2a2a2a"/><stop offset=".9" stop-color="#151515"/><stop offset="1" stop-color="#0c0c0c"/></radialGradient></defs><rect x="0" y="0" width="177" height="89" fill="url(#tg)" /><g filter="url(#fb)" ><path d="M86 64L22 90h50z" fill="#9a9a9a" opacity=".7"/><rect x="0" y="88.5" width="177" height="13" fill="#121212" /><rect x="0" y="88.8" width="62" height="3" fill="#9c9c9c" /><rect x="116" y="88.8" width="61" height="3" fill="#8c8c8c" /><rect x="62" y="89" width="54" height="2.5" fill="#585858" /><path d="M62 92h40l8 9.500H56z" fill="#7c7c7c" /><rect x="0" y="93" width="60" height="2" fill="#3a3a3a" /><rect x="20" y="97" width="40" height="2" fill="#444" /></g><g filter="url(#fa)" ><path d="M77 56.500c2.500-1.500 5.500 0 5.500 3l-.5 3c1.500 1 2 3 1.500 5l-4 8c1 3 .5 6-1 8l2 7h-11l1-5c-6-3-8-9-6-15 2-7 7-11 12.500-14z" fill="#0a0a0a" /><path d="M99 48c3-2 6-1 7 1 3-1.500 6 0 7 3 4 4 6.500 12 6 22-.5 5-2 9-4 11l1 6h-8l-1-4-5 4h-9l3-6c-3-7-2-18 1-26-1-4-1-9 2-11z" fill="#0b0b0b" /><rect x="84.5" y="70" width="9" height="16" fill="#444" opacity=".6"/><ellipse cx="90" cy="64" rx="3.5" ry="6" fill="#fff" /></g></svg>
<div class="b" style="left:1212.6px;top:376.9px;width:16.7px;height:16.7px;border-radius:3.500px;background:#fff;border:1.200px solid #dcdcde"></div>
<span class="t" style="left:1239.0px;top:376.87px;font-size:14.8px;line-height:19px;color:#2a2d33;font-weight:400;transform:scaleX(0.9502);">System Volum...</span>
<div class="b" style="left:412.1px;top:421.2px;width:178px;height:137px;border-radius:7px;background:#fff;border:1px solid #eeeff1;box-shadow:0 1px 2px rgba(0,0,0,.07)"></div>
<svg class="b" style="left:412.6px;top:421.7px;border-radius:6px 6px 0 0" width="177" height="101.500" viewBox="0 0 177 101.500" preserveAspectRatio="none"><defs><linearGradient id="rb" x1="0" y1="0" x2="0" y2="1"><stop offset="0" stop-color="#c5c3c6"/><stop offset="1" stop-color="#dad6d3"/></linearGradient></defs><rect x="0" y="0" width="177" height="101.5" fill="url(#rb)" /><g filter="url(#fc)" ><ellipse cx="150" cy="98" rx="30" ry="5" fill="#a29c9c" /></g><g filter="url(#fa)" ><path d="M0 47C4 66 16 88 33 94C46 90 54 74 59 58C64 42 67 22 63 8C60 0 54 1 52 8C50 22 53 44 59 58C64 72 74 88 90 94C103 90 111 76 116 62C122 46 130 26 126 15C123 9 118 10 116 16C114 30 118 52 124 70C126 78 128 82 131 86" stroke="#cf211b" stroke-width="5.2" fill="none" stroke-linejoin="round"/><path d="M0 47C4 66 16 88 33 94C46 90 54 74 59 58C64 42 67 22 63 8" stroke="#e8603c" stroke-width="1.4" fill="none" opacity=".7"/></g><g filter="url(#fa)" ><ellipse cx="153" cy="54.5" rx="21" ry="41.5" fill="#1f1516" /><ellipse cx="144.5" cy="55" rx="17.5" ry="41.5" fill="#4a3a39" /><ellipse cx="144.5" cy="55" rx="14.5" ry="36" fill="#241a1c" /><path d="M144.500 55L142 20M144.500 55L158 35M144.500 55L157 80M144.500 55L138 90M144.500 55L131 50" stroke="#7e7a7c" stroke-width="4" fill="none" /><ellipse cx="144.5" cy="55" rx="5" ry="11" fill="#6e6a6c" /><ellipse cx="144.5" cy="55" rx="2.5" ry="6" fill="#2a2224" /><ellipse cx="140" cy="72" rx="6" ry="10" fill="#3a3a5a" opacity=".6"/><rect x="164" y="34" width="6" height="2" fill="#a04848" /><rect x="167" y="47" width="4" height="2" fill="#c8c8c8" /></g></svg>
<div class="b" style="left:427.40000000000003px;top:532.2px;width:16.7px;height:16.7px;border-radius:3.500px;background:#fff;border:1.200px solid #dcdcde"></div>
<span class="t" style="left:453.8px;top:532.17px;font-size:14.8px;line-height:19px;color:#2a2d33;font-weight:400;transform:scaleX(0.9502);">System Volum...</span>
<div class="b" style="left:608.4px;top:421.2px;width:178px;height:137px;border-radius:7px;background:#fff;border:1px solid #eeeff1;box-shadow:0 1px 2px rgba(0,0,0,.07)"></div>
<svg class="b" style="left:608.9px;top:421.7px;border-radius:6px 6px 0 0" width="177" height="101.500" viewBox="0 0 177 101.500" preserveAspectRatio="none"><rect x="0" y="0" width="177" height="101.5" fill="#090c10" /><g filter="url(#fb)" ><path d="M6 0h140v50L0 78V6z" fill="#19283a" /><path d="M12 8h36v48l-36 6z" fill="#1b2e46" /><rect x="25" y="28" width="7.5" height="27" fill="#2b8fe0" /><rect x="14" y="10" width="14" height="2.5" fill="#3a8ad0" /><rect x="4" y="8" width="4" height="30" fill="#2a5a8a" opacity=".8"/><rect x="50" y="10" width="66" height="40" fill="#0e141b" /><rect x="50.5" y="13" width="65" height="4.5" fill="#3b8a62" /><rect x="50.5" y="20.5" width="65" height="3.6" fill="#e2a2d2" /><rect x="51" y="26.5" width="24" height="12.5" fill="#c8d0da" /><rect x="55" y="27" width="3" height="12" fill="#1a2230" /><rect x="61" y="27" width="3" height="12" fill="#1a2230" /><rect x="67" y="27" width="3" height="12" fill="#1a2230" /><rect x="72" y="27" width="2" height="12" fill="#1a2230" /><rect x="76" y="26" width="40" height="10" fill="#5a8cc4" /><rect x="78" y="24" width="5" height="3" fill="#8ab8e8" /><rect x="104" y="24" width="6" height="3" fill="#8ab8e8" /><rect x="76" y="34" width="40" height="2" fill="#1a2436" /><rect x="77" y="37" width="39" height="6" fill="#3fae9e" /><rect x="53" y="43.5" width="63" height="5" fill="#4fc7ae" /><path d="M0 64l52-9v10L0 76z" fill="#1a2a3a" /><rect x="7" y="70" width="4.5" height="5" fill="#3d94d4" /><rect x="15.5" y="69" width="5" height="5" fill="#37a0d8" /><rect x="23" y="66" width="7.5" height="7.5" fill="#a655c2" /><rect x="32.5" y="66" width="4.5" height="6" fill="#8c4cc0" /><rect x="40" y="65" width="4.5" height="5" fill="#d8a060" /><rect x="47" y="64.5" width="3.5" height="4.5" fill="#dfe6ee" /><rect x="124" y="52" width="20" height="2" fill="#5a7088" transform="rotate(-8 134 53)"/></g><g filter="url(#fa)" ><circle cx="129.500" cy="12" r="3.600" fill="none" stroke="#30c060" stroke-width="1.800"/><path d="M126 12a3.600 3.600 0 0 1 3.600-3.600" stroke="#e04040" stroke-width="1.800" fill="none"/><path d="M133 12a3.600 3.600 0 0 1-3.600 3.600" stroke="#4060e0" stroke-width="1.800" fill="none"/><circle cx="138.500" cy="12" r="3.600" fill="none" stroke="#30c060" stroke-width="1.800"/><path d="M135 12a3.600 3.600 0 0 1 3.600-3.600" stroke="#e0a030" stroke-width="1.800" fill="none"/><path d="M142 12a3.600 3.600 0 0 1-3.600 3.600" stroke="#4060e0" stroke-width="1.800" fill="none"/><path d="M130.500 0a3.600 3.600 0 0 0 7 0" stroke="#30c060" stroke-width="1.800" fill="none"/></g><g filter="url(#fc)" ><path d="M40 78L177 58v43.500H20z" fill="#0d141c" /></g><g filter="url(#fa)" ><rect x="103" y="83" width="5.5" height="1.800" rx=".9" fill="#a8c8e6" opacity="1" transform="rotate(22 103 83)"/><rect x="120" y="86.5" width="5.5" height="1.800" rx=".9" fill="#a8c8e6" opacity="1" transform="rotate(22 120 86.5)"/><rect x="136.5" y="92" width="5.5" height="1.800" rx=".9" fill="#a8c8e6" opacity="1" transform="rotate(22 136.5 92)"/><rect x="77" y="89.5" width="5.5" height="1.800" rx=".9" fill="#a8c8e6" opacity="1" transform="rotate(22 77 89.5)"/><rect x="94" y="93" width="5.5" height="1.800" rx=".9" fill="#a8c8e6" opacity="1" transform="rotate(22 94 93)"/><rect x="109" y="97" width="5.5" height="1.800" rx=".9" fill="#a8c8e6" opacity="1" transform="rotate(22 109 97)"/><rect x="125" y="94.5" width="5.5" height="1.800" rx=".9" fill="#a8c8e6" opacity="1" transform="rotate(22 125 94.5)"/><rect x="88" y="79" width="5.5" height="1.800" rx=".9" fill="#a8c8e6" opacity="1" transform="rotate(22 88 79)"/><rect x="142" y="84" width="5.5" height="1.800" rx=".9" fill="#a8c8e6" opacity="0.55" transform="rotate(22 142 84)"/><rect x="155" y="88" width="3.5" height="1.800" rx=".9" fill="#a8c8e6" opacity="0.55" transform="rotate(22 155 88)"/><rect x="150" y="78" width="3.5" height="1.800" rx=".9" fill="#a8c8e6" opacity="0.55" transform="rotate(22 150 78)"/><rect x="132" y="79" width="3.5" height="1.800" rx=".9" fill="#a8c8e6" opacity="0.55" transform="rotate(22 132 79)"/><rect x="115" y="76" width="3.5" height="1.800" rx=".9" fill="#a8c8e6" opacity="0.55" transform="rotate(22 115 76)"/><rect x="163" y="95" width="3.5" height="1.800" rx=".9" fill="#a8c8e6" opacity="0.55" transform="rotate(22 163 95)"/><rect x="70" y="98" width="3.5" height="1.800" rx=".9" fill="#a8c8e6" opacity="0.55" transform="rotate(22 70 98)"/><rect x="58" y="92" width="3.5" height="1.800" rx=".9" fill="#a8c8e6" opacity="0.55" transform="rotate(22 58 92)"/><rect x="168" y="82" width="3.5" height="1.800" rx=".9" fill="#a8c8e6" opacity="0.55" transform="rotate(22 168 82)"/><rect x="160" y="70" width="3.5" height="1.800" rx=".9" fill="#a8c8e6" opacity="0.55" transform="rotate(22 160 70)"/><rect x="140" y="68" width="3.5" height="1.800" rx=".9" fill="#a8c8e6" opacity="0.55" transform="rotate(22 140 68)"/><rect x="122" y="66" width="3.5" height="1.800" rx=".9" fill="#a8c8e6" opacity="0.55" transform="rotate(22 122 66)"/><rect x="112.9" y="76.3" width="2.400" height="1" fill="#4e7498" opacity=".7" transform="rotate(22 112.9 76.3)"/><rect x="47.9" y="81.8" width="2.400" height="1" fill="#4e7498" opacity=".7" transform="rotate(22 47.9 81.8)"/><rect x="45.1" y="78.9" width="2.400" height="1" fill="#4e7498" opacity=".7" transform="rotate(22 45.1 78.9)"/><rect x="97.7" y="94.2" width="2.400" height="1" fill="#4e7498" opacity=".7" transform="rotate(22 97.7 94.2)"/><rect x="125.3" y="99.0" width="2.400" height="1" fill="#4e7498" opacity=".7" transform="rotate(22 125.3 99.0)"/><rect x="118.5" y="77.5" width="2.400" height="1" fill="#4e7498" opacity=".7" transform="rotate(22 118.5 77.5)"/><rect x="172.8" y="63.8" width="2.400" height="1" fill="#4e7498" opacity=".7" transform="rotate(22 172.8 63.8)"/><rect x="156.8" y="73.3" width="2.400" height="1" fill="#4e7498" opacity=".7" transform="rotate(22 156.8 73.3)"/><rect x="82.0" y="93.8" width="2.400" height="1" fill="#4e7498" opacity=".7" transform="rotate(22 82.0 93.8)"/><rect x="64.6" y="84.7" width="2.400" height="1" fill="#4e7498" opacity=".7" transform="rotate(22 64.6 84.7)"/><rect x="126.9" y="76.5" width="2.400" height="1" fill="#4e7498" opacity=".7" transform="rotate(22 126.9 76.5)"/><rect x="132.5" y="78.7" width="2.400" height="1" fill="#4e7498" opacity=".7" transform="rotate(22 132.5 78.7)"/><rect x="82.7" y="84.8" width="2.400" height="1" fill="#4e7498" opacity=".7" transform="rotate(22 82.7 84.8)"/><rect x="101.6" y="73.7" width="2.400" height="1" fill="#4e7498" opacity=".7" transform="rotate(22 101.6 73.7)"/><rect x="148.0" y="89.3" width="2.400" height="1" fill="#4e7498" opacity=".7" transform="rotate(22 148.0 89.3)"/><rect x="73.2" y="84.4" width="2.400" height="1" fill="#4e7498" opacity=".7" transform="rotate(22 73.2 84.4)"/><rect x="111.4" y="96.1" width="2.400" height="1" fill="#4e7498" opacity=".7" transform="rotate(22 111.4 96.1)"/><rect x="139.2" y="73.2" width="2.400" height="1" fill="#4e7498" opacity=".7" transform="rotate(22 139.2 73.2)"/><rect x="173.3" y="66.6" width="2.400" height="1" fill="#4e7498" opacity=".7" transform="rotate(22 173.3 66.6)"/><rect x="96.9" y="91.5" width="2.400" height="1" fill="#4e7498" opacity=".7" transform="rotate(22 96.9 91.5)"/><rect x="60.7" y="81.1" width="2.400" height="1" fill="#4e7498" opacity=".7" transform="rotate(22 60.7 81.1)"/><rect x="45.3" y="88.1" width="2.400" height="1" fill="#4e7498" opacity=".7" transform="rotate(22 45.3 88.1)"/><rect x="144.0" y="84.3" width="2.400" height="1" fill="#4e7498" opacity=".7" transform="rotate(22 144.0 84.3)"/><rect x="159.1" y="74.2" width="2.400" height="1" fill="#4e7498" opacity=".7" transform="rotate(22 159.1 74.2)"/><rect x="134.6" y="85.2" width="2.400" height="1" fill="#4e7498" opacity=".7" transform="rotate(22 134.6 85.2)"/><rect x="118.9" y="79.8" width="2.400" height="1" fill="#4e7498" opacity=".7" transform="rotate(22 118.9 79.8)"/><rect x="154.2" y="98.8" width="2.400" height="1" fill="#4e7498" opacity=".7" transform="rotate(22 154.2 98.8)"/><rect x="104.5" y="87.9" width="2.400" height="1" fill="#4e7498" opacity=".7" transform="rotate(22 104.5 87.9)"/><rect x="48.3" y="89.4" width="2.400" height="1" fill="#4e7498" opacity=".7" transform="rotate(22 48.3 89.4)"/><rect x="128.0" y="100.7" width="2.400" height="1" fill="#4e7498" opacity=".7" transform="rotate(22 128.0 100.7)"/><rect x="151.8" y="73.1" width="2.400" height="1" fill="#4e7498" opacity=".7" transform="rotate(22 151.8 73.1)"/><rect x="92.5" y="88.1" width="2.400" height="1" fill="#4e7498" opacity=".7" transform="rotate(22 92.5 88.1)"/><rect x="43.1" y="80.0" width="2.400" height="1" fill="#4e7498" opacity=".7" transform="rotate(22 43.1 80.0)"/><rect x="48.0" y="92.0" width="2.400" height="1" fill="#4e7498" opacity=".7" transform="rotate(22 48.0 92.0)"/><rect x="93.2" y="96.0" width="2.400" height="1" fill="#4e7498" opacity=".7" transform="rotate(22 93.2 96.0)"/><rect x="51.0" y="79.5" width="2.400" height="1" fill="#4e7498" opacity=".7" transform="rotate(22 51.0 79.5)"/><rect x="114.7" y="96.5" width="2.400" height="1" fill="#4e7498" opacity=".7" transform="rotate(22 114.7 96.5)"/></g></svg>
<div class="b" style="left:623.6999999999999px;top:532.2px;width:16.7px;height:16.7px;border-radius:3.500px;background:#fff;border:1.200px solid #dcdcde"></div>
<span class="t" style="left:650.1px;top:532.17px;font-size:14.8px;line-height:19px;color:#2a2d33;font-weight:400;transform:scaleX(0.9502);">System Volum...</span>
<div class="b" style="left:804.7px;top:421.2px;width:178px;height:137px;border-radius:7px;background:#fff;border:1px solid #eeeff1;box-shadow:0 1px 2px rgba(0,0,0,.07)"></div>
<svg class="b" style="left:805.2px;top:421.7px;border-radius:6px 6px 0 0" width="177" height="101.500" viewBox="0 0 177 101.500" preserveAspectRatio="none"><rect x="0" y="0" width="177" height="101.5" fill="#111115" /><g filter="url(#fb)" ><rect x="0" y="0" width="15" height="86" fill="#5a5a66" /><rect x="3" y="0" width="2.5" height="86" fill="#777784" /><rect x="9" y="0" width="2" height="86" fill="#70707c" /><defs><linearGradient id="sf" x1="0" y1="0" x2="0" y2="1"><stop offset="0" stop-color="#8e8e96"/><stop offset="1" stop-color="#3e3e46"/></linearGradient></defs><path d="M0 88L30 78h119l28 10v13.500H0z" fill="url(#sf)" /><rect x="31" y="42" width="117" height="38" fill="#dcdce0" /><rect x="31" y="42" width="32" height="38" fill="#cfcfd4" /><rect x="52" y="50" width="10" height="29" fill="#9f9fa4" /><rect x="64" y="43" width="50" height="37" fill="#fbfbfd" /><rect x="120" y="44" width="28" height="36" fill="#d6d6da" /><rect x="133" y="49" width="8" height="17" fill="#212126" /><path d="M54 89L58 78h56l4 11z" fill="#e2e2e6" /><path d="M0 88l14-3v-85h-14z" fill="#3c3c46" opacity=".5"/><rect x="148" y="0" width="29" height="86" fill="#15151a" /></g><g filter="url(#fa)" ><rect x="35" y="16.5" width="102" height="1.8" fill="#3a3a42" /><rect x="50" y="19.5" width="30" height="1.5" fill="#34343c" /><rect x="98" y="19.5" width="38" height="1.5" fill="#34343c" /><rect x="80" y="2" width="18" height="14" fill="#1c1c22" /><rect x="65" y="8" width="4.5" height="5.5" fill="#c6c6ca" transform="rotate(15 67 11)"/><rect x="78" y="10" width="3.5" height="5" fill="#b8b8bc" /><rect x="96.5" y="9" width="3.5" height="5" fill="#c4c4c8" /><rect x="113" y="9" width="4.5" height="5" fill="#d0d0d4" transform="rotate(20 115 11)"/><rect x="132" y="14" width="4" height="5" fill="#bcbcc0" transform="rotate(-20 134 16)"/><rect x="54" y="25" width="6" height="3.5" fill="#c8c8cc" transform="rotate(20 57 27)"/><rect x="68" y="24" width="8" height="4" fill="#a8a8ac" /><rect x="67" y="33" width="3.5" height="4" fill="#98989c" /><rect x="112" y="29" width="11" height="4" fill="#c0c0c4" /><rect x="125" y="29" width="8" height="3.5" fill="#d4d4d8" transform="rotate(-20 129 31)"/><rect x="107" y="28" width="2.5" height="4" fill="#6a6a6e" /><ellipse cx="92" cy="34" rx="10.8" ry="6.8" fill="#fff" /><path d="M71 49.500l6 4 1 12-4 8-6 1.500-7-8-1-10 5-6z" fill="#121216" /><path d="M67 70l-7 13M62 62l-6 0M60 70v13M60 83l-6 2M60 83l7 2" stroke="#4a4a50" stroke-width="0.9" fill="none" /><path d="M106 43l9-1 9 4 2 7-5 5h-8l-6-5-2-7z" fill="#131317" /><path d="M114 57v31M114 88l-5 2M114 88l6 2M123 58v26M130 56v28M130 84l8 3M130 84l-6 3" stroke="#55555b" stroke-width="0.9" fill="none" /><circle cx="124" cy="58.5" r="2" fill="#fff" /><ellipse cx="104" cy="92" rx="6.8" ry="7.5" fill="#131317" /><rect x="117" y="91" width="12" height="2" fill="#1e1e22" transform="rotate(-10 123 92)"/><path d="M140 84c6 2 8 6 5 10" stroke="#3a3a40" stroke-width="0.7" fill="none" /></g></svg>
<div class="b" style="left:820.0px;top:532.2px;width:16.7px;height:16.7px;border-radius:3.500px;background:#fff;border:1.200px solid #dcdcde"></div>
<span class="t" style="left:846.4000000000001px;top:532.17px;font-size:14.8px;line-height:19px;color:#2a2d33;font-weight:400;transform:scaleX(0.9502);">System Volum...</span>
<div class="b" style="left:1001.0px;top:421.2px;width:178px;height:137px;border-radius:7px;background:#fff;border:1px solid #eeeff1;box-shadow:0 1px 2px rgba(0,0,0,.07)"></div>
<svg class="b" style="left:1001.5px;top:421.7px;border-radius:6px 6px 0 0" width="177" height="101.500" viewBox="0 0 177 101.500" preserveAspectRatio="none"><rect x="0" y="0" width="177" height="101.5" fill="#dbe5e9" /><g filter="url(#fc)" ><rect x="78" y="0" width="38" height="42" fill="#f6fafb" /><rect x="0" y="0" width="22" height="50" fill="#d0dce2" /><rect x="60" y="40" width="60" height="16" fill="#ccd6da" /><rect x="160" y="0" width="17" height="60" fill="#e6eef0" /><ellipse cx="40" cy="33" rx="10.5" ry="16" fill="#1b5b49" /><ellipse cx="34" cy="40" rx="5" ry="9" fill="#2a6a56" /><ellipse cx="46" cy="28" rx="5" ry="9" fill="#164c3c" /><rect x="36" y="52" width="7.5" height="6.5" fill="#c28270" /><rect x="24" y="27" width="3" height="12" fill="#2a2a30" /><rect x="4" y="47" width="12" height="14" fill="#343840" /><path d="M0 56h14l8 20 10 8v12H0z" fill="#18324e" /><path d="M18 76h16l-2 16H20z" fill="#1c1c24" /><ellipse cx="23.5" cy="62" rx="10.5" ry="14" fill="#ece8e0" /><ellipse cx="23" cy="44" rx="5.5" ry="9" fill="#6b4232" /><ellipse cx="23.5" cy="47" rx="3" ry="4.5" fill="#d8a890" /><rect x="19" y="50" width="2.5" height="12" fill="#7a4a38" /><rect x="26.5" y="50" width="2.5" height="12" fill="#7a4a38" /><ellipse cx="30" cy="79" rx="4" ry="2.5" fill="#d4b0a0" /><rect x="36" y="62" width="10" height="6" fill="#5a7890" /><rect x="33" y="80" width="12" height="22" fill="#5c3020" /><rect x="44" y="68" width="30" height="12" fill="#d6dade" /><ellipse cx="75.5" cy="49" rx="4.8" ry="5.5" fill="#d3ab94" /><ellipse cx="75.5" cy="46" rx="4.5" ry="2.5" fill="#c8c0b8" /><path d="M68 58c4-3 12-3 17 0l3 12H69z" fill="#5b7279" /><ellipse cx="102" cy="52" rx="4" ry="8" fill="#d8b8a0" /><rect x="97" y="58" width="12" height="12" fill="#e0dcd8" /><rect x="0" y="92" width="26" height="10" fill="#e08c7c" /><rect x="0" y="86" width="8" height="10" fill="#3a2a2a" /><path d="M40 101.500c0-12 4-22 16-24 10 1 17 10 17 24z" fill="#15151b" /><ellipse cx="56.5" cy="68" rx="12.5" ry="11.5" fill="#d9c19a" /><ellipse cx="56" cy="63" rx="8" ry="6" fill="#e6d2b0" /><ellipse cx="50" cy="76" rx="5" ry="6" fill="#cbb088" /><ellipse cx="64" cy="76" rx="4.5" ry="6" fill="#cbb088" /><path d="M78 101.500c0-10 6-18 16-18 10 0 16 8 16 18z" fill="#dbbab2" /><ellipse cx="88" cy="76" rx="11.5" ry="17" fill="#39231f" /><ellipse cx="87" cy="66" rx="8" ry="6" fill="#4a2e28" /><path d="M80 84l-3 17.500h6zM97 84l3 17.500h-5z" fill="#39231f" /></g><g filter="url(#fb)" ><path d="M112 50c4-8 10-13 18-14h34c6 4 9 12 9 22v26c-3 2-8 2-12 1l-2 16.500H110l-2-22c-5-2-8-6-8-10 2-8 6-14 12-19.500z" fill="#0b0c14" /><path d="M131 4c4-5 18-6 24 0 4 8 2 18 2 26 1 8-2 16-6 20-4-6-8-12-8-20-6-2-10-4-12-8-2-6-2-12 0-18z" fill="#472a25" /><ellipse cx="150" cy="50" rx="3" ry="10" fill="#6a2a4a" transform="rotate(15 150 50)"/><path d="M120 26c2-2 8-2 10 1l2 9-6 4-7-4z" fill="#c9a088" /><rect x="120" y="28" width="12" height="2" fill="#1a1a20" /><path d="M116 0h14l-1 8-6 5-6-4z" fill="#0e0e14" /><path d="M98 29.500l17-2 3.500 12-17 3z" fill="#181820" /><path d="M100.500 31l13.500-1.600 2.600 8.800-13.500 2.200z" fill="#9ea4ac" /><rect x="102" y="41" width="16" height="3" fill="#17171d" transform="rotate(-8 110 42)"/><circle cx="167.5" cy="27.5" r="5.5" fill="#1d1a1a" /><ellipse cx="169" cy="28" rx="4" ry="4.5" fill="#b2a486" /><path d="M158 34c3-3 8-3 10 0l-2 4h-8z" fill="#15151b" /></g></svg>
<div class="b" style="left:1016.3px;top:532.2px;width:16.7px;height:16.7px;border-radius:3.500px;background:#fff;border:1.200px solid #dcdcde"></div>
<span class="t" style="left:1042.7px;top:532.17px;font-size:14.8px;line-height:19px;color:#2a2d33;font-weight:400;transform:scaleX(0.9502);">System Volum...</span>
<div class="b" style="left:1197.3px;top:421.2px;width:178px;height:137px;border-radius:7px;background:#fff;border:1px solid #eeeff1;box-shadow:0 1px 2px rgba(0,0,0,.07)"></div>
<svg class="b" style="left:1197.8px;top:421.7px;border-radius:6px 6px 0 0" width="177" height="101.500" viewBox="0 0 177 101.500" preserveAspectRatio="none"><rect x="0" y="0" width="177" height="101.5" fill="#e4560c" /><g filter="url(#fd)" ><rect x="0" y="0" width="70" height="60" fill="#d24a0a" /><ellipse cx="33" cy="52" rx="22" ry="14" fill="#f89a4c" /><ellipse cx="30" cy="50" rx="10" ry="8" fill="#ffd9a0" /><rect x="6" y="17" width="52" height="9" fill="#b83c08" /><rect x="8" y="4" width="50" height="6" fill="#c8501a" /><ellipse cx="40" cy="3" rx="16" ry="3" fill="#e8b890" /><rect x="0" y="82" width="74" height="20" fill="#3a2a22" /><rect x="0" y="66" width="60" height="16" fill="#b8480e" /><path d="M77 0h36l7 101.5H67z" fill="#f0620c" /><path d="M80 0h14l-4 101.5H72z" fill="#f67416" /><path d="M108 0h12l6 60-8 41h-8z" fill="#b8c098" /><ellipse cx="113" cy="12" rx="4" ry="10" fill="#f4f0d8" /><path d="M120 0h41l16 60v41.5h-50z" fill="#ee5e0a" /><path d="M124 0h16l6 101.5h-18z" fill="#f46c12" /><path d="M161 0h16v60z" fill="#8c8a68" /><ellipse cx="173" cy="28" rx="5" ry="14" fill="#c0b8a8" /><path d="M112 60l10 0 4 41.5h-14z" fill="#d8560e" /><path d="M169 66h8v35.500h-13z" fill="#4a2a18" /></g><g filter="url(#fc)" ><ellipse cx="30" cy="74" rx="8" ry="14" fill="#15110f" /><ellipse cx="52" cy="72" rx="6" ry="11" fill="#1c1512" /><ellipse cx="42" cy="62" rx="4" ry="4" fill="#1a1210" /><circle cx="34" cy="63" r="4" fill="#ece6e2" /><circle cx="47" cy="65" r="3" fill="#e6dcd6" /><circle cx="58" cy="81" r="5" fill="#eee8e4" /><circle cx="40" cy="88" r="5" fill="#f0eae6" /><circle cx="16" cy="95" r="6" fill="#d8d0ca" /><circle cx="28" cy="97" r="4" fill="#e0d8d2" /><ellipse cx="50" cy="90" rx="4" ry="6" fill="#7a1c18" /><rect x="60" y="84" width="14" height="17.5" fill="#2a211d" /></g><g filter="url(#fa)" ><path d="M86 71h7v14l14 8v8.5H91l1-9-6-8z" fill="#8c8682" /><rect x="92" y="93" width="15" height="8.5" fill="#6e5248" /><rect x="88" y="30.5" width="26" height="7" fill="#8e8884" rx="1.5"/><rect x="123" y="42" width="16.5" height="16" fill="#4c4649" rx="4"/><rect x="124" y="45" width="4" height="10" fill="#2a2628" /><rect x="59" y="36" width="65" height="36" fill="#181213" rx="5"/><rect x="68.5" y="40" width="47" height="28.5" fill="#7c1a12" /><path d="M70 42l40-2 4 8-44 6z" fill="#a82a1c" /><path d="M72 56l18-6 24 4v12l-40 2z" fill="#5c120e" /><rect x="88" y="62" width="16" height="5" fill="#d0a8a0" /><rect x="82" y="44" width="10" height="3" fill="#d8b0a8" /><rect x="96" y="43" width="12" height="3" fill="#c89890" /></g></svg>
<div class="b" style="left:1212.6px;top:532.2px;width:16.7px;height:16.7px;border-radius:3.500px;background:#fff;border:1.200px solid #dcdcde"></div>
<span class="t" style="left:1239.0px;top:532.17px;font-size:14.8px;line-height:19px;color:#2a2d33;font-weight:400;transform:scaleX(0.9502);">System Volum...</span>
<div class="b" style="left:412.1px;top:576.5px;width:178px;height:137px;border-radius:7px;background:#fff;border:1px solid #eeeff1;box-shadow:0 1px 2px rgba(0,0,0,.07)"></div>
<svg class="b" style="left:412.6px;top:577.0px;border-radius:6px 6px 0 0" width="177" height="101.500" viewBox="0 0 177 101.500" preserveAspectRatio="none"><defs><linearGradient id="ss" x1="0" y1="0" x2="0" y2="1"><stop offset="0" stop-color="#46475a"/><stop offset=".16" stop-color="#6c6a7c"/><stop offset=".27" stop-color="#a58590"/><stop offset=".36" stop-color="#e79a82"/><stop offset=".47" stop-color="#f2a578"/><stop offset=".6" stop-color="#f1a062"/><stop offset=".69" stop-color="#cf8152"/><stop offset=".74" stop-color="#84605c"/><stop offset=".8" stop-color="#54485a"/><stop offset=".9" stop-color="#3c3646"/></linearGradient></defs><rect x="0" y="0" width="177" height="101.5" fill="url(#ss)" /><g filter="url(#fd)" ><path d="M70 30c30-5 70-8 107-6v9c-30 0-70 2-100 6z" fill="#f2a48a" opacity=".85"/><path d="M0 38c30-4 60-5 90-3v5c-30-1-60 1-90 4z" fill="#ec9c86" opacity=".6"/><path d="M110 44h67v14h-67z" fill="#f4b07e" opacity=".5"/><ellipse cx="15" cy="20" rx="40" ry="8" fill="#55566a" opacity=".6"/><ellipse cx="150" cy="14" rx="40" ry="7" fill="#6c6472" opacity=".5"/></g><g filter="url(#fa)" ><path d="M0 89.500l30-2 22-3 14-5.500 30-2 30 1.500 51 1v23H0z" fill="#0b0909" /></g><g filter="url(#fa)" ><path d="M54.500 86c-1-7-2.500-17-1-25 3-8 9-14 16.500-18l1.500-2.500c0-3 2-5 4.500-5 3 .5 4.500 3 4 6l-2 4 1 2c3 1.500 5 3 7 5l-1.500 1.500-8.500 2.500c-3 5-7 9-11 11.500l-2 9 .5 9z" fill="#0a0808" /><path d="M80 43l8-3 6 1.500 2 5.500-3 2.500h-9l-3-3z" fill="#0a0808" /><path d="M87.500 50L79 78M87.500 50L95.500 77M87.500 50L85.500 78M72 58l12-6" stroke="#0a0808" stroke-width="1.5" fill="none" /><rect x="124.5" y="40" width="7" height="6.5" fill="#0c0909" rx="1"/><path d="M128 46.500L114 79M128 46.500L139.500 79M128.500 46.500L130 65M120 64.500h13" stroke="#0a0808" stroke-width="1.3" fill="none" /></g></svg>
<div class="b" style="left:427.40000000000003px;top:687.5px;width:16.7px;height:16.7px;border-radius:3.500px;background:#fff;border:1.200px solid #dcdcde"></div>
<span class="t" style="left:453.8px;top:687.47px;font-size:14.8px;line-height:19px;color:#2a2d33;font-weight:400;transform:scaleX(0.9502);">System Volum...</span>
<div class="b" style="left:608.4px;top:576.5px;width:178px;height:137px;border-radius:7px;background:#f5f9fe;border:1px solid #eeeff1;box-shadow:0 1px 2px rgba(0,0,0,.07)"></div>
<svg class="b" style="left:608.9px;top:577.0px;border-radius:6px 6px 0 0" width="177" height="101.500" viewBox="0 0 177 101.500" preserveAspectRatio="none"><defs><linearGradient id="pk" x1="0" y1="1" x2="1" y2="0"><stop offset="0" stop-color="#d652a8"/><stop offset=".35" stop-color="#c2448e"/><stop offset=".62" stop-color="#8c3062"/><stop offset="1" stop-color="#b82e3a"/></linearGradient></defs><rect x="0" y="0" width="177" height="101.5" fill="url(#pk)" /><g filter="url(#fd)" ><path d="M0 0h44L0 40z" fill="#130f1a" /><ellipse cx="150" cy="14" rx="36" ry="18" fill="#c23646" /><ellipse cx="60" cy="6" rx="34" ry="10" fill="#7a2c58" /><path d="M112 101.500l30-38 35-14v52z" fill="#121a3c" /><ellipse cx="141" cy="88" rx="15" ry="12" fill="#2466c6" /><ellipse cx="134" cy="101" rx="10" ry="6" fill="#3a86da" /><path d="M158 84l19-26v43.500h-24z" fill="#1a0c18" /><ellipse cx="30" cy="80" rx="36" ry="24" fill="#d458aa" /><ellipse cx="90" cy="96" rx="26" ry="10" fill="#d04a90" /></g><g filter="url(#fc)" ><path d="M24 28L44 8l22-3 14 9 22-7 12 6 4 20 24 3 20 10 8 10-20 24-22 8-20-4-8 17H84l-4-23-16-12-19-11-20-13z" fill="#2a1130" /><path d="M23 29l26-4 18 14-14 16-28-14z" fill="#170a1b" /><path d="M140 37l28 10-14 24-22-12z" fill="#1c0d20" /><path d="M99 6l14 4-2 16-12-2z" fill="#b44c76" /><path d="M80 12l18 2 6 14-10 14-22-6z" fill="#4c2254" /><path d="M84 78l24 6-8 17.500H86z" fill="#6a2646" /><path d="M70 62l40 8-4 10-30-8z" fill="#7a3a78" /><path d="M58 44l60 16-2 5-60-16z" fill="#9a7ac4" opacity=".85"/><ellipse cx="102" cy="44" rx="20" ry="10" fill="#1c0c22" /><ellipse cx="134" cy="58" rx="10" ry="7" fill="#3c3c8c" opacity=".6"/><path d="M48 12l12-4 6 10-10 6z" fill="#4a1c48" /><path d="M118 34l16 2 2 10-14 2z" fill="#5a2458" /></g><g filter="url(#fa)" ><path d="M2 45L24 10" stroke="#2fb2d2" stroke-width="3.2" fill="none" stroke-linecap="round"/><path d="M25 28.500L35 17.500" stroke="#cdbcea" stroke-width="2.6" fill="none" stroke-linecap="round"/><path d="M46 59L69 21" stroke="#b4a2e2" stroke-width="2.4" fill="none" stroke-linecap="round"/><path d="M161 79L177 49" stroke="#2fb2d2" stroke-width="3.2" fill="none" stroke-linecap="round"/><path d="M135.500 0l3.500 8.500" stroke="#d8c8ee" stroke-width="2.2" fill="none" /><path d="M163 0l7.500 17" stroke="#b8a4e0" stroke-width="2.2" fill="none" /><path d="M25 101.500l5-10.500" stroke="#c4b0e6" stroke-width="2.2" fill="none" /><path d="M68 101.500l6-9.500" stroke="#c4b0e6" stroke-width="2.2" fill="none" /><path d="M112 101.500l8-15.500" stroke="#c0b4ea" stroke-width="2.2" fill="none" /><path d="M150 101.500l6-9.500" stroke="#49b6e0" stroke-width="2.2" fill="none" /></g><ellipse cx="89.5" cy="53.5" rx="11.2" ry="7" fill="#fff" /><circle cx="89.5" cy="53.5" r="4.2" fill="#14101a" /><circle cx="91.5" cy="52" r="1.9" fill="#fff" /></svg>
<div class="b" style="left:623.6999999999999px;top:687.5px;width:16.7px;height:16.7px;border-radius:3.500px;background:#fff;border:1.600px solid #3a96d8"></div>
<span class="t" style="left:650.1px;top:687.47px;font-size:14.8px;line-height:19px;color:#2a2d33;font-weight:400;transform:scaleX(0.9502);">System Volum...</span>
<div class="b" style="left:52px;top:884px;width:1376px;height:8px;background:linear-gradient(rgba(0,0,0,0),rgba(0,0,0,.045))"></div>
<div class="b" style="left:51px;top:891.5px;width:1378px;height:107.5px;background:#fff;border-radius:0 0 14px 14px"></div>
<svg class="b" style="left:88px;top:908px;" width="76" height="76" viewBox="0 0 76 76" fill="none"><defs><linearGradient id="cg" x1="1" y1="0" x2="0" y2="1"><stop offset="0" stop-color="#3686de"/><stop offset="1" stop-color="#62c0ee"/></linearGradient><linearGradient id="ck" x1="0" y1="0" x2="1" y2="0"><stop offset="0" stop-color="#1f97f0"/><stop offset=".55" stop-color="#2aa8ec"/><stop offset="1" stop-color="#46d2c6"/></linearGradient></defs><circle cx="37.750" cy="37.400" r="35" stroke="url(#cg)" stroke-width="2" fill="#fff"/><path d="M18.400 38.800q-.6-.6 0-1.200l5.800-5.400q.6-.5 1.200.1l8.800 9.800L56.200 20.400l1.200 1L34.300 53.700q-.8 1-1.700 0z" fill="url(#ck)"/></svg>
<span class="t" style="left:176.6px;top:934.60px;font-size:19.2px;line-height:25px;color:#15171c;font-weight:700;transform:scaleX(0.9069);">Files Found:</span>
<span class="t" style="left:285.3px;top:934.60px;font-size:19.2px;line-height:25px;color:#2a8bcf;font-weight:400;transform:scaleX(0.9209);">174616</span>
<span class="t" style="left:350.5px;top:934.60px;font-size:19.2px;line-height:25px;color:#8e9196;font-weight:400;transform:scaleX(0.9596);">(90.06GB)</span>
<div class="b" style="left:1239.5px;top:921px;width:160px;height:48.5px;border-radius:6px;background:#1a93ee"></div>
<span class="t" style="left:1288.8px;top:935.74px;font-size:17.2px;line-height:22px;color:#eef8ff;font-weight:400;transform:scaleX(0.9555);-webkit-text-stroke:.3px #eef8ff;">Recover</span>
</body></html>
